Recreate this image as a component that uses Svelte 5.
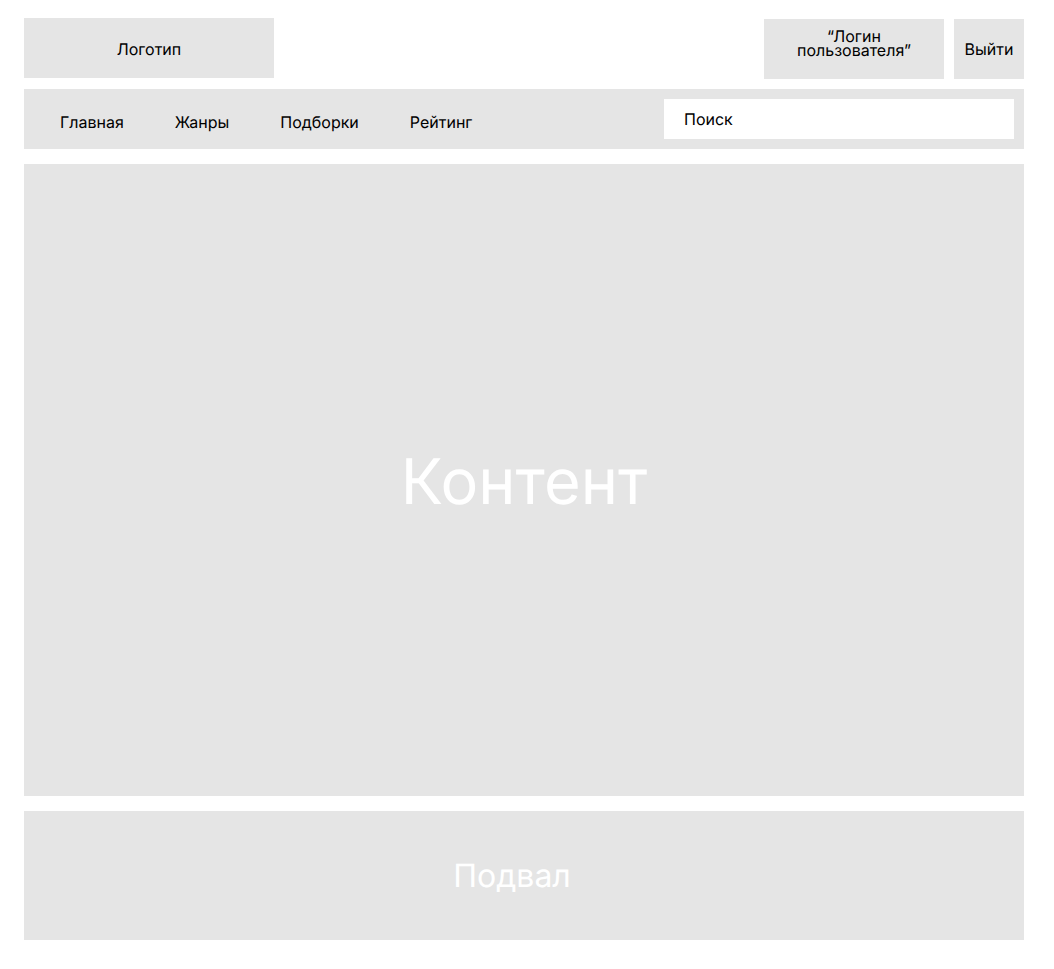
<script>
  const links = [
    { label: 'Главная', href: '#home' },
    { label: 'Жанры', href: '#genres' },
    { label: 'Подборки', href: '#collections' },
    { label: 'Рейтинг', href: '#rating' }
  ];
</script>

<div class="page">
  <header>
    <a class="logo" href="#home">Логотип</a>
    <div class="account">
      <a class="user" href="#profile">“Логин пользователя”</a>
      <button type="button">Выйти</button>
    </div>
  </header>

  <div class="bar">
    <nav>
      {#each links as link}
        <a href={link.href}>{link.label}</a>
      {/each}
    </nav>
    <input type="search" placeholder="Поиск" aria-label="Поиск" />
  </div>

  <main>Контент</main>
  <footer>Подвал</footer>
</div>

<style>
  :global(body) {
    margin: 0;
    background: #fff;
  }

  .page {
    box-sizing: border-box;
    min-height: 100vh;
    padding: 18px 30px 29px 24px;
    display: flex;
    flex-direction: column;
    font: 16px/20px Inter, sans-serif;
    text-rendering: geometricPrecision;
    color: #000;
  }

  a {
    color: inherit;
    text-decoration: none;
  }

  header {
    display: flex;
    justify-content: space-between;
    margin-bottom: 10px;
  }

  .logo,
  .user,
  button {
    box-sizing: border-box;
    height: 60px;
    display: flex;
    align-items: center;
    justify-content: center;
    background: #e5e5e5;
  }

  .logo {
    width: 250px;
    padding-top: 2px;
  }

  .account {
    display: flex;
    gap: 10px;
    padding-top: 1px;
  }

  .user {
    width: 180px;
    padding: 0 32px 12px;
    line-height: 14px;
    text-align: center;
  }

  button {
    width: 70px;
    padding: 0;
    border: 0;
    font: inherit;
    text-rendering: inherit;
    color: inherit;
  }

  .bar {
    box-sizing: border-box;
    min-height: 60px;
    padding: 10px 10px 10px 36px;
    margin-bottom: 15px;
    display: flex;
    align-items: center;
    justify-content: space-between;
    background: #e5e5e5;
  }

  nav {
    display: flex;
    gap: 51px;
    padding-top: 6px;
  }

  input {
    box-sizing: border-box;
    width: 350px;
    height: 40px;
    padding: 0 20px;
    border: 0;
    border-radius: 0;
    appearance: none;
    background: #fff;
    font: inherit;
    text-rendering: inherit;
    color: inherit;
  }

  input::placeholder {
    color: #000;
    opacity: 1;
  }

  main,
  footer {
    display: flex;
    align-items: center;
    justify-content: center;
    background: #e5e5e5;
    color: #fff;
  }

  main {
    flex: 1;
    padding-top: 4px;
    margin-bottom: 15px;
    font-size: 63px;
    line-height: 78px;
  }

  footer {
    padding: 45px 24px 44px 0;
    font-size: 32px;
    line-height: 40px;
  }
</style>
